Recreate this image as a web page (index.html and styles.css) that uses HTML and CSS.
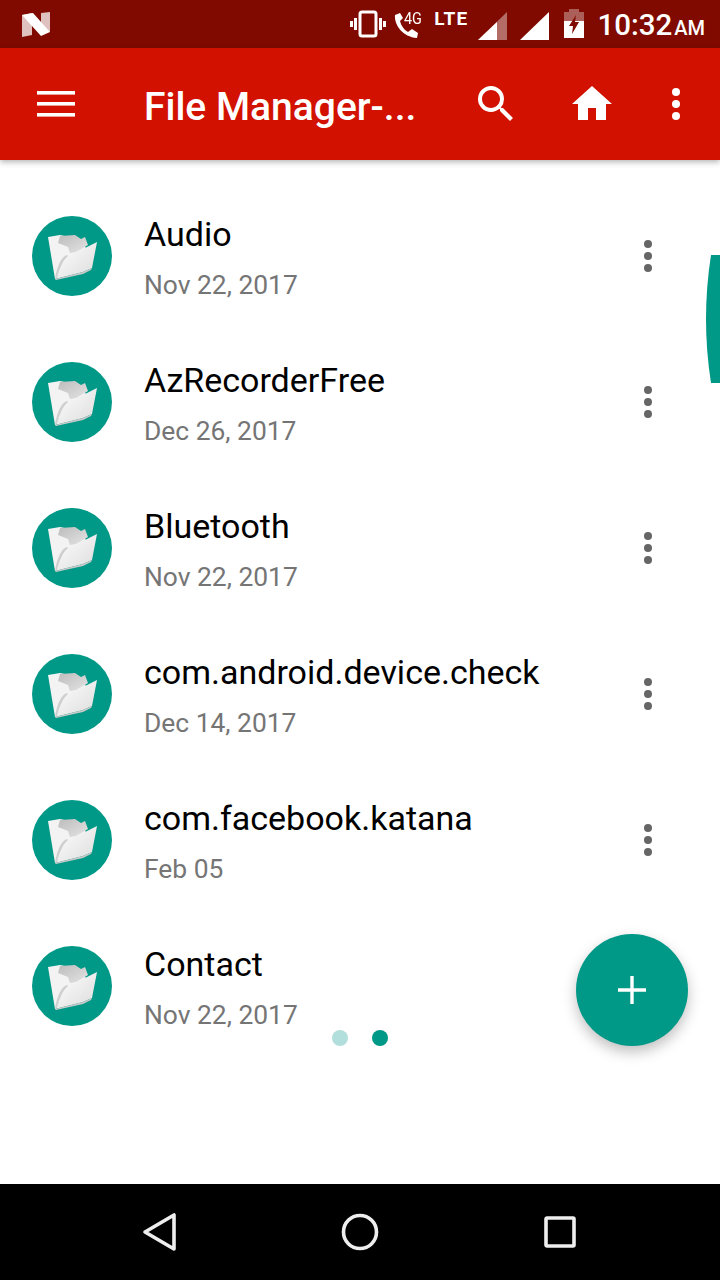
FILE: index.html
```html
<!DOCTYPE html>
<html>
<head>
	<title>File Manager</title>
	<meta charset="utf-8">
	<meta name="viewport" content="width=device-width, initial-scale=1">
	<link rel="stylesheet" href="styles.css">
</head>
<body>
<div class="phone">

	<svg width="0" height="0" class="defs">
		<defs>
			<linearGradient id="folderFront" x1="0" y1="0" x2="1" y2="1">
				<stop offset="0" stop-color="#ffffff"/>
				<stop offset="1" stop-color="#dcdcdc"/>
			</linearGradient>
			<linearGradient id="folderArrow" x1="0" y1="0" x2="1" y2="1">
				<stop offset="0" stop-color="#bcbcbc"/>
				<stop offset="1" stop-color="#e4e4e4"/>
			</linearGradient>
			<filter id="soft" x="-5%" y="-5%" width="110%" height="110%">
				<feGaussianBlur stdDeviation=".45"/>
			</filter>
			<g id="folder" filter="url(#soft)">
				<path d="M16 21 L28 19 L52 24 L56 44 L23 63 Z" fill="#f3f3f3"/>
				<path d="M26 27 L28 20 L43 19 L49 23 L53 21 L56 29 L44 36 L38 37 L36 31 Z" fill="url(#folderArrow)"/>
				<path d="M23 63 C25 50 29 41 35 39 L45 36 L65 26 L60 52 L51 56 Z" fill="url(#folderFront)"/>
				<path d="M23 63 C25 50 29 41 35 39 L36 40 C31 44 27 53 25 62 Z" fill="#cfcfcf"/>
				<path d="M23 63 L51 56 L60 52 L59 54 L51 58 L24 64 Z" fill="#c9c9c9"/>
			</g>
			<g id="dots">
				<circle cx="12" cy="4" r="4"/>
				<circle cx="12" cy="16" r="4"/>
				<circle cx="12" cy="28" r="4"/>
			</g>
		</defs>
	</svg>

	<div class="statusbar">
		<svg class="n-logo" width="34" height="26" viewBox="0 0 34 26">
			<path d="M6 4 L16 2 V24 L6 26 Z" fill="#fff" opacity=".75"/>
			<path d="M25 2 L34 1 V21 L25 17 Z" fill="#fff" opacity=".75"/>
			<path d="M6 4 L17 2 L34 21 L25 25 Z" fill="#fff"/>
		</svg>
		<div class="status-right">
			<svg width="36" height="28" viewBox="0 0 36 28" class="st-vibrate">
				<rect x="10" y="2" width="16" height="24" rx="2" fill="none" stroke="#fff" stroke-width="3"/>
				<path d="M5.5 8 V20 M1.5 11 V17 M30.5 8 V20 M34.5 11 V17" stroke="#fff" stroke-width="3" fill="none"/>
			</svg>
			<div class="st-call">
				<svg width="26" height="30" viewBox="0 0 26 30">
					<path d="M7 4 L2 6 C1 16 10 28 24 29 L25 24 L19 20 L15 23 C11 21 8 16 7 12 L10 9 Z" fill="#fff"/>
				</svg>
				<span class="st-4g">4G</span>
			</div>
			<span class="st-lte">LTE</span>
			<svg width="30" height="28" viewBox="0 0 30 28" class="st-sig1">
				<path d="M0 28 L29 0 V28 Z" fill="#fff" opacity=".4"/>
				<path d="M0 28 L19 10 V28 Z" fill="#fff"/>
			</svg>
			<svg width="30" height="28" viewBox="0 0 30 28" class="st-sig2">
				<path d="M0 28 L29 0 V28 Z" fill="#fff"/>
			</svg>
			<svg width="22" height="30" viewBox="0 0 22 30" class="st-batt">
				<path d="M6 0 H16 V3 H21 V12 H1 V3 H6 Z" fill="#fff" opacity=".35"/>
				<path d="M1 12 H21 V29 H1 Z" fill="#fff"/>
				<path d="M13 6 L6 17 H10 L9 25 L16 13 H12 Z" fill="#800a00"/>
			</svg>
			<span class="st-time">10:32</span>
			<span class="st-ampm">AM</span>
		</div>
	</div>

	<header class="appbar">
		<svg class="ic-menu" width="48" height="48" viewBox="0 0 48 48" fill="#fff">
			<rect x="5" y="11" width="38" height="3.6"/>
			<rect x="5" y="22" width="38" height="3.6"/>
			<rect x="5" y="33" width="38" height="3.6"/>
		</svg>
		<h1 class="appbar-title">File Manager-...</h1>
		<svg class="ic-search" width="48" height="48" viewBox="0 0 24 24" fill="#fff">
			<path d="M15.5 14h-.79l-.28-.27A6.471 6.471 0 0 0 16 9.5 6.5 6.5 0 1 0 9.5 16c1.61 0 3.09-.59 4.23-1.57l.27.28v.79l5 4.99L20.49 19l-4.99-5zm-6 0C7.01 14 5 11.99 5 9.5S7.01 5 9.5 5 14 7.01 14 9.5 11.99 14 9.5 14z"/>
		</svg>
		<svg class="ic-home" width="48" height="48" viewBox="0 0 24 24" fill="#fff">
			<path d="M10 20v-6h4v6h5v-8h3L12 3 2 12h3v8z"/>
		</svg>
		<svg class="ic-more" width="24" height="32" viewBox="0 0 24 32" fill="#fff"><use href="#dots"/></svg>
	</header>

	<main class="list">
		<div class="row">
			<svg class="folder" width="80" height="80" viewBox="0 0 80 80"><circle cx="40" cy="40" r="40" fill="#009886"/><use href="#folder"/></svg>
			<div class="row-text">
				<div class="row-name">Audio</div>
				<div class="row-date">Nov 22, 2017</div>
			</div>
			<svg class="row-more" width="24" height="32" viewBox="0 0 24 32" fill="#666"><use href="#dots"/></svg>
		</div>
		<div class="row">
			<svg class="folder" width="80" height="80" viewBox="0 0 80 80"><circle cx="40" cy="40" r="40" fill="#009886"/><use href="#folder"/></svg>
			<div class="row-text">
				<div class="row-name">AzRecorderFree</div>
				<div class="row-date">Dec 26, 2017</div>
			</div>
			<svg class="row-more" width="24" height="32" viewBox="0 0 24 32" fill="#666"><use href="#dots"/></svg>
		</div>
		<div class="row">
			<svg class="folder" width="80" height="80" viewBox="0 0 80 80"><circle cx="40" cy="40" r="40" fill="#009886"/><use href="#folder"/></svg>
			<div class="row-text">
				<div class="row-name">Bluetooth</div>
				<div class="row-date">Nov 22, 2017</div>
			</div>
			<svg class="row-more" width="24" height="32" viewBox="0 0 24 32" fill="#666"><use href="#dots"/></svg>
		</div>
		<div class="row">
			<svg class="folder" width="80" height="80" viewBox="0 0 80 80"><circle cx="40" cy="40" r="40" fill="#009886"/><use href="#folder"/></svg>
			<div class="row-text">
				<div class="row-name">com.android.device.check</div>
				<div class="row-date">Dec 14, 2017</div>
			</div>
			<svg class="row-more" width="24" height="32" viewBox="0 0 24 32" fill="#666"><use href="#dots"/></svg>
		</div>
		<div class="row">
			<svg class="folder" width="80" height="80" viewBox="0 0 80 80"><circle cx="40" cy="40" r="40" fill="#009886"/><use href="#folder"/></svg>
			<div class="row-text">
				<div class="row-name">com.facebook.katana</div>
				<div class="row-date">Feb 05</div>
			</div>
			<svg class="row-more" width="24" height="32" viewBox="0 0 24 32" fill="#666"><use href="#dots"/></svg>
		</div>
		<div class="row">
			<svg class="folder" width="80" height="80" viewBox="0 0 80 80"><circle cx="40" cy="40" r="40" fill="#009886"/><use href="#folder"/></svg>
			<div class="row-text">
				<div class="row-name">Contact</div>
				<div class="row-date">Nov 22, 2017</div>
			</div>
		</div>
	</main>

	<svg class="side-tab" width="14" height="128" viewBox="0 0 14 128">
		<path d="M14 0 H5 Q-5 64 5 128 H14 Z" fill="#009886"/>
	</svg>

	<div class="pager">
		<span class="pager-dot pager-dot-off"></span>
		<span class="pager-dot"></span>
	</div>

	<div class="fab">
		<svg width="32" height="32" viewBox="0 0 32 32"><path d="M16 2 V30 M2 16 H30" stroke="#fff" stroke-width="3.4"/></svg>
	</div>

	<nav class="navbar">
		<svg width="36" height="40" viewBox="0 0 36 40" fill="none" stroke="#eee" stroke-width="3.6" stroke-linejoin="round">
			<path d="M32 3 V37 L3 20 Z"/>
		</svg>
		<svg width="40" height="40" viewBox="0 0 40 40" fill="none" stroke="#eee" stroke-width="3.6">
			<circle cx="20" cy="20" r="16.5"/>
		</svg>
		<svg width="36" height="36" viewBox="0 0 36 36" fill="none" stroke="#eee" stroke-width="3.6" stroke-linejoin="round">
			<rect x="4" y="4" width="28" height="28" rx="1"/>
		</svg>
	</nav>

</div>
</body>
</html>
```

FILE: styles.css
```css
body{
	margin: 0;
	font-family: Roboto, "Liberation Sans", sans-serif;
	background-color: white;
}

.phone{
	position: relative;
	width: 720px;
	height: 1280px;
	overflow: hidden;
	display: flex;
	flex-direction: column;
}

.defs{
	position: absolute;
}

/* status bar */
.statusbar{
	height: 48px;
	background-color: #800a00;
	display: flex;
	align-items: center;
	justify-content: space-between;
	padding: 0 15px 0 16px;
	color: white;
	flex-shrink: 0;
}

.status-right{
	display: flex;
	align-items: center;
}

.st-call{
	display: flex;
	align-items: flex-start;
	width: 38px;
	margin-left: 7px;
	position: relative;
}

.st-4g{
	position: absolute;
	left: 11px;
	top: -1px;
	font-size: 17px;
	transform: scaleX(.85);
	transform-origin: left top;
}

.st-lte{
	font-size: 19px;
	font-weight: 700;
	margin-left: 3px;
	margin-top: -12px;
	letter-spacing: 1.2px;
}

.st-sig1{
	margin-left: 10px;
	margin-top: 4px;
}

.st-sig2{
	margin-left: 12px;
	margin-top: 4px;
}

.st-batt{
	margin-left: 13px;
}

.st-time{
	font-size: 29.5px;
	font-weight: 500;
	margin-left: 12px;
	margin-top: 2px;
}

.st-ampm{
	font-size: 20px;
	font-weight: 500;
	margin-left: 2px;
	margin-top: 7px;
}

/* app bar */
.appbar{
	height: 112px;
	background-color: #d21100;
	display: flex;
	align-items: center;
	box-shadow: 0 2px 6px rgba(0,0,0,.3);
	position: relative;
	flex-shrink: 0;
}

.ic-menu{
	margin-left: 32px;
}

.appbar-title{
	font-size: 39px;
	font-weight: 500;
	color: white;
	margin: 0 0 0 64px;
	padding-top: 6px;
	width: 328px;
	white-space: nowrap;
}

.ic-home{
	margin-left: 48px;
}

.ic-more{
	margin-left: 48px;
}

/* list */
.list{
	flex: 1;
	padding-top: 23px;
}

.row{
	height: 146px;
	display: flex;
	align-items: center;
	padding-left: 32px;
}

.row-text{
	margin-left: 32px;
	margin-top: 3px;
	flex: 1;
}

.row-name{
	font-size: 34px;
	line-height: 40px;
	color: black;
}

.row-date{
	font-size: 26.4px;
	line-height: 32px;
	color: #757575;
	margin-top: 15px;
}

.row-more{
	margin-right: 60px;
}

.side-tab{
	position: absolute;
	right: 0;
	top: 255px;
}

.pager{
	position: absolute;
	top: 1030px;
	left: 332px;
	display: flex;
	gap: 24px;
}

.pager-dot{
	width: 16px;
	height: 16px;
	border-radius: 50%;
	background-color: #009886;
}

.pager-dot-off{
	background-color: #b2dfdb;
}

.fab{
	position: absolute;
	left: 576px;
	top: 934px;
	width: 112px;
	height: 112px;
	border-radius: 50%;
	background-color: #009886;
	box-shadow: 0 6px 14px rgba(0,0,0,.25);
	display: flex;
	align-items: center;
	justify-content: center;
}

/* nav bar */
.navbar{
	height: 96px;
	background-color: black;
	flex-shrink: 0;
	display: flex;
	align-items: center;
	justify-content: space-between;
	padding: 0 142px 0 142px;
}
```
